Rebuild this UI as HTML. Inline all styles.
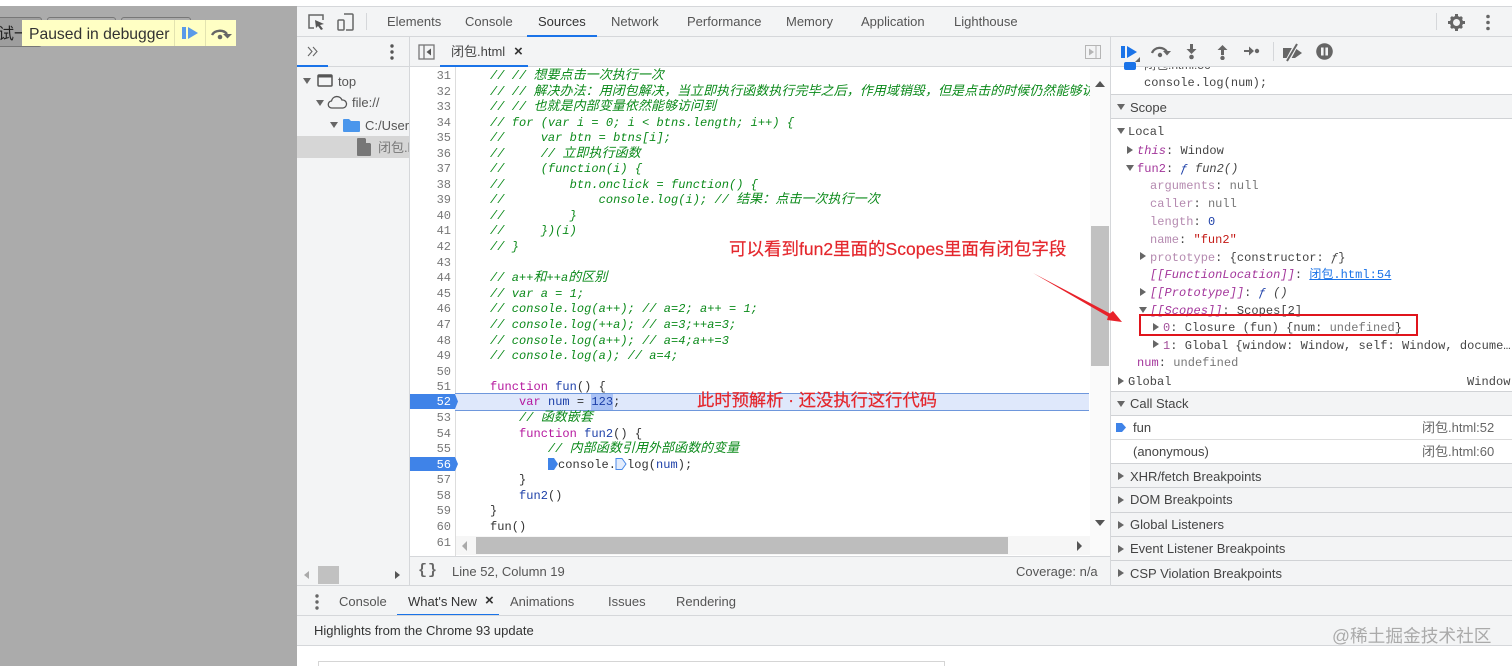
<!DOCTYPE html>
<html><head><meta charset="utf-8"><style>
html,body{margin:0;padding:0;width:1512px;height:666px;overflow:hidden;background:#fff}
body{position:relative;font-family:"Liberation Sans","Noto Sans CJK SC",sans-serif;font-size:13px;color:#555}
.a{position:absolute}
.t{position:absolute;white-space:pre;line-height:16px}
.b{position:absolute;background:#d5d7da}
.m{font-family:"Liberation Mono","Noto Sans CJK SC",monospace;font-size:12px;letter-spacing:.04px;color:#444}
.h{position:absolute;left:1111px;width:401px;background:#f3f4f5;border-bottom:1px solid #d0d2d5;box-sizing:border-box}
.tri{position:absolute;width:0;height:0}
.r{border-top:4px solid transparent;border-bottom:4px solid transparent;border-left:6px solid #666}
.d{border-left:4.5px solid transparent;border-right:4.5px solid transparent;border-top:6px solid #666}
.l{position:relative;height:16px;line-height:16px;white-space:pre;font-family:"Liberation Mono","Noto Sans CJK SC",monospace;font-size:12px;letter-spacing:.04px;color:#333}
.g{color:#0b8a1a;font-style:italic}
.g b{font:italic 13px/1px "Noto Sans CJK SC",sans-serif;letter-spacing:.05px}
.k{color:#b5179e}.f{color:#1c3fa8}
.p{color:#a3509b}.pi{color:#a3369b;font-style:italic}.n{color:#777}.v{color:#555}
#nums div{height:16px;line-height:16px;text-align:right;font-family:"Liberation Mono",monospace;font-size:12px;color:#777}
.l:nth-child(2),.l:nth-child(4),.l:nth-child(6),.l:nth-child(8),.l:nth-child(10),.l:nth-child(13),.l:nth-child(15),.l:nth-child(18),.l:nth-child(20),.l:nth-child(21),.l:nth-child(24),.l:nth-child(26),.l:nth-child(28){height:15px}
#nums div:nth-child(2),#nums div:nth-child(4),#nums div:nth-child(6),#nums div:nth-child(8),#nums div:nth-child(10),#nums div:nth-child(13),#nums div:nth-child(15),#nums div:nth-child(18),#nums div:nth-child(20),#nums div:nth-child(21),#nums div:nth-child(24),#nums div:nth-child(26),#nums div:nth-child(28){height:15px}
</style></head><body>

<!-- page behind devtools -->
<div class="a" style="left:0;top:6px;width:297px;height:660px;background:#ababab"></div>
<div class="a" style="left:-10px;top:17px;width:50px;height:28px;border:1px solid #777;border-radius:3px;background:#9e9e9e"></div>
<div class="a" style="left:47px;top:17px;width:67px;height:10px;border:1px solid #777;border-radius:3px"></div>
<div class="a" style="left:121px;top:17px;width:68px;height:10px;border:1px solid #777;border-radius:3px"></div>
<div class="t" style="left:-2px;top:26px;font-size:16px;line-height:18px;color:#222">试一</div>
<div class="a" style="left:22px;top:20px;width:214px;height:26px;background:#ffffc4"></div>
<div class="t" style="left:29px;top:26px;font-size:15.7px;line-height:17px;color:#333">Paused in debugger</div>
<div class="a" style="left:174px;top:20px;width:1px;height:26px;background:#e3e3b0"></div>
<div class="a" style="left:205px;top:20px;width:1px;height:26px;background:#e3e3b0"></div>
<svg class="a" style="left:180px;top:25px" width="20" height="16"><rect x="2" y="2" width="4" height="12" fill="#5a9ae8"/><path d="M8 2l10 6-10 6z" fill="#5a9ae8"/></svg>
<svg class="a" style="left:209px;top:26px" width="24" height="16"><path d="M3 9a8.500 7 0 0 1 15 -1" fill="none" stroke="#666" stroke-width="2.400"/><path d="M14 8h9l-4.500 4.500z" fill="#666"/><circle cx="11" cy="11" r="2.300" fill="#666"/></svg>

<!-- devtools base -->
<div class="a" style="left:297px;top:6px;width:1215px;height:660px;background:#f3f4f5"></div>
<div class="b" style="left:297px;top:6px;width:1215px;height:1px"></div>
<div class="b" style="left:297px;top:36px;width:1215px;height:1px"></div>

<!-- top toolbar -->
<svg class="a" style="left:307px;top:12px" width="20" height="20" fill="none" stroke="#666" stroke-width="1.500"><path d="M7 16H2V3h14v5"/><path d="M8 8l9 4-4 1 3 4-2 1-3-4-2 2z" fill="#555" stroke="none"/></svg>
<svg class="a" style="left:336px;top:12px" width="20" height="20" fill="none" stroke="#666" stroke-width="1.500"><rect x="2" y="8" width="6" height="10" rx="1"/><path d="M8 2h8a1 1 0 0 1 1 1v14a1 1 0 0 1-1 1h-6"/></svg>
<div class="b" style="left:366px;top:13px;width:1px;height:17px"></div>
<div class="t" style="left:387px;top:14px">Elements</div>
<div class="t" style="left:465px;top:14px">Console</div>
<div class="t" style="left:538px;top:14px;color:#333">Sources</div>
<div class="t" style="left:611px;top:14px">Network</div>
<div class="t" style="left:687px;top:14px">Performance</div>
<div class="t" style="left:786px;top:14px">Memory</div>
<div class="t" style="left:861px;top:14px">Application</div>
<div class="t" style="left:954px;top:14px">Lighthouse</div>
<div class="a" style="left:527px;top:35px;width:70px;height:2px;background:#1a73e8"></div>
<div class="b" style="left:1436px;top:13px;width:1px;height:17px"></div>
<svg class="a" style="left:1448px;top:14px" width="17" height="17"><circle cx="8.500" cy="8.500" r="5" fill="none" stroke="#666" stroke-width="3"/><path d="M7 0h3v3H7zM7 14h3v3H7zM0 7h3v3H0zM14 7h3v3h-3zM2 4l2-2 2 2-2 2zM11 4l2-2 2 2-2 2zM2 13l2-2 2 2-2 2zM11 13l2-2 2 2-2 2z" fill="#666"/></svg>
<svg class="a" style="left:1484px;top:14px" width="8" height="18" fill="#666"><circle cx="4" cy="2.500" r="1.800"/><circle cx="4" cy="8.500" r="1.800"/><circle cx="4" cy="14.500" r="1.800"/></svg>

<!-- navigator -->
<div class="a" style="left:297px;top:67px;width:112px;height:490px;background:#f3f4f5"></div>
<div class="b" style="left:297px;top:66px;width:1215px;height:1px"></div>
<div class="b" style="left:409px;top:37px;width:1px;height:549px"></div>
<svg class="a" style="left:307px;top:46px" width="12" height="11" fill="none" stroke="#666" stroke-width="1.100"><path d="M1 1l4 4.500L1 10M6 1l4 4.500L6 10"/></svg>
<svg class="a" style="left:388px;top:44px" width="8" height="16" fill="#555"><circle cx="4" cy="2" r="1.700"/><circle cx="4" cy="8" r="1.700"/><circle cx="4" cy="14" r="1.700"/></svg>
<div class="a" style="left:297px;top:65px;width:31px;height:2px;background:#1a73e8"></div>
<div class="tri d" style="left:303px;top:78px"></div>
<svg class="a" style="left:317px;top:74px" width="17" height="14"><rect x="1" y="1" width="14" height="11" rx="1" fill="none" stroke="#555" stroke-width="1.500"/><rect x="1" y="1" width="14" height="2.500" fill="#555"/></svg>
<div class="t" style="left:338px;top:74px">top</div>
<div class="tri d" style="left:316px;top:100px"></div>
<svg class="a" style="left:327px;top:95px" width="21" height="15"><path d="M5 13a3.500 3.500 0 0 1-.5-7 5.500 5.500 0 0 1 10.500-1 4 4 0 0 1 1 8z" fill="none" stroke="#555" stroke-width="1.300"/></svg>
<div class="t" style="left:352px;top:95px">file://</div>
<div class="tri d" style="left:330px;top:122px"></div>
<svg class="a" style="left:343px;top:118px" width="17" height="15"><path d="M0 2a1 1 0 0 1 1-1h5l2 2h8a1 1 0 0 1 1 1v9a1 1 0 0 1-1 1H1a1 1 0 0 1-1-1z" fill="#4a96ec"/></svg>
<div class="a" style="left:365px;top:118px;width:44px;overflow:hidden;white-space:pre;line-height:16px">C:/Users</div>
<div class="a" style="left:297px;top:136px;width:112px;height:22px;background:#d6d6d6"></div>
<svg class="a" style="left:357px;top:138px" width="14" height="18"><path d="M0 1a1 1 0 0 1 1-1h7l6 6v11a1 1 0 0 1-1 1H1a1 1 0 0 1-1-1z" fill="#777"/><path d="M9 .5V5h4.500z" fill="#d6d6d6"/></svg>
<div class="a" style="left:378px;top:140px;width:31px;overflow:hidden;white-space:pre;line-height:16px;color:#777">闭包.html</div>
<!-- nav scrollbar -->
<div class="tri" style="left:304px;top:571px;border-top:4.5px solid transparent;border-bottom:4.5px solid transparent;border-right:5px solid #aaa"></div>
<div class="a" style="left:318px;top:566px;width:21px;height:18px;background:#c1c1c1"></div>
<div class="tri" style="left:395px;top:571px;border-top:4.5px solid transparent;border-bottom:4.500px solid transparent;border-left:5px solid #555"></div>

<!-- editor tabs -->
<svg class="a" style="left:418px;top:44px" width="18" height="17"><rect x="1" y="1" width="15" height="14" fill="none" stroke="#777" stroke-width="1.300"/><path d="M6 1v14" stroke="#777" stroke-width="1.300"/><path d="M13 4.500v7L8.500 8z" fill="#555"/></svg>
<div class="t" style="left:451px;top:44px;color:#444">闭包.html</div>
<div class="t" style="left:514px;top:44px;font-weight:bold;color:#333;font-size:15px">×</div>
<div class="a" style="left:440px;top:65px;width:88px;height:2px;background:#1a73e8"></div>
<svg class="a" style="left:1085px;top:45px" width="17" height="15"><rect x=".5" y=".5" width="15" height="13" fill="none" stroke="#b5b5b5"/><path d="M11 1v12" stroke="#b5b5b5"/><path d="M4 3.500v7L9 7z" fill="#b5b5b5"/></svg>

<!-- editor -->
<div class="a" style="left:410px;top:67px;width:700px;height:489px;background:#fff"></div>
<div class="b" style="left:455px;top:67px;width:1px;height:489px;background:#ddd"></div>
<div class="a" style="left:455px;top:393px;width:634px;height:18px;background:#dfe8fb;border-top:1px solid #6e97dc;border-bottom:1px solid #6e97dc;box-sizing:border-box"></div>
<div class="a" style="left:591px;top:394px;width:22px;height:16px;background:#aac2f5"></div>
<svg class="a" style="left:410px;top:394px" width="49" height="15"><path d="M0 0h45l3 7.500-3 7.500H0z" fill="#3f83e8"/></svg>
<svg class="a" style="left:410px;top:457px" width="49" height="14"><path d="M0 0h45l3 7-3 7H0z" fill="#3f83e8"/></svg>

<div id="nums" class="a" style="left:410px;top:68px;width:41px;height:488px;overflow:hidden">
<div>31</div><div>32</div><div>33</div><div>34</div><div>35</div><div>36</div><div>37</div><div>38</div><div>39</div><div>40</div><div>41</div><div>42</div><div>43</div><div>44</div><div>45</div><div>46</div><div>47</div><div>48</div><div>49</div><div>50</div><div>51</div><div style="color:#fff">52</div><div>53</div><div>54</div><div>55</div><div style="color:#fff">56</div><div>57</div><div>58</div><div>59</div><div>60</div><div>61</div>
</div>

<div class="a" style="left:490px;top:68px;width:600px;height:468px;overflow:hidden">
<div class="l g">// // <b>想要点击一次执行一次</b></div>
<div class="l g">// // <b>解决办法：用闭包解决，当立即执行函数执行完毕之后，作用域销毁，但是点击的时候仍然能够访问到</b></div>
<div class="l g">// // <b>也就是内部变量依然能够访问到</b></div>
<div class="l g">// for (var i = 0; i &lt; btns.length; i++) {</div>
<div class="l g">//     var btn = btns[i];</div>
<div class="l g">//     // <b>立即执行函数</b></div>
<div class="l g">//     (function(i) {</div>
<div class="l g">//         btn.onclick = function() {</div>
<div class="l g">//             console.log(i); // <b>结果：点击一次执行一次</b></div>
<div class="l g">//         }</div>
<div class="l g">//     })(i)</div>
<div class="l g">// }</div>
<div class="l"> </div>
<div class="l g">// a++<b>和</b>++a<b>的区别</b></div>
<div class="l g">// var a = 1;</div>
<div class="l g">// console.log(a++); // a=2; a++ = 1;</div>
<div class="l g">// console.log(++a); // a=3;++a=3;</div>
<div class="l g">// console.log(a++); // a=4;a++=3</div>
<div class="l g">// console.log(a); // a=4;</div>
<div class="l"> </div>
<div class="l"><span class="k">function</span> <span class="f">fun</span>() {</div>
<div class="l">    <span class="k">var</span> <span class="f">num</span> = <span class="f">123</span>;</div>
<div class="l g">    // <b>函数嵌套</b></div>
<div class="l">    <span class="k">function</span> <span class="f">fun2</span>() {</div>
<div class="l g">        // <b>内部函数引用外部函数的变量</b></div>
<div class="l"><span style="position:absolute;left:68px">console.</span><span style="position:absolute;left:137px">log(<span class="f">num</span>);</span></div>
<div class="l">    }</div>
<div class="l">    <span class="f">fun2</span>()</div>
<div class="l">}</div>
<div class="l">fun()</div>
</div>
<svg class="a" style="left:547px;top:458px" width="12" height="12"><path d="M1 0h6l4 6-4 6H1z" fill="#3f83e8"/></svg>
<svg class="a" style="left:615px;top:458px" width="12" height="12"><path d="M1 .5h6l4 5.500-4 5.500H1z" fill="#e3ecfc" stroke="#4a8ae8"/></svg>

<!-- editor scrollbars -->
<div class="a" style="left:1090px;top:67px;width:20px;height:489px;background:#fafafa"></div>
<div class="a" style="left:1091px;top:226px;width:18px;height:140px;background:#c1c1c1"></div>
<div class="tri" style="left:1095px;top:81px;border-left:5px solid transparent;border-right:5px solid transparent;border-bottom:6px solid #555"></div>
<div class="tri" style="left:1095px;top:520px;border-left:5px solid transparent;border-right:5px solid transparent;border-top:6px solid #555"></div>
<div class="a" style="left:456px;top:536px;width:634px;height:19px;background:#f6f6f6"></div>
<div class="a" style="left:476px;top:537px;width:532px;height:17px;background:#bdbdbd"></div>
<div class="tri" style="left:462px;top:541px;border-top:5px solid transparent;border-bottom:5px solid transparent;border-right:5px solid #aaa"></div>
<div class="tri" style="left:1077px;top:541px;border-top:5px solid transparent;border-bottom:5px solid transparent;border-left:5px solid #555"></div>

<!-- status bar -->
<div class="b" style="left:410px;top:556px;width:700px;height:1px"></div>
<div class="t" style="left:418px;top:562px;font:bold 15px/18px 'Liberation Mono',monospace;color:#666;letter-spacing:1px">{}</div>
<div class="t" style="left:452px;top:564px">Line 52, Column 19</div>
<div class="t" style="left:1016px;top:564px">Coverage: n/a</div>
<div class="b" style="left:297px;top:585px;width:1215px;height:1px"></div>

<!-- drawer -->
<svg class="a" style="left:313px;top:593px" width="8" height="18" fill="#666"><circle cx="4" cy="3" r="1.700"/><circle cx="4" cy="9" r="1.700"/><circle cx="4" cy="15" r="1.700"/></svg>
<div class="t" style="left:339px;top:594px">Console</div>
<div class="t" style="left:408px;top:594px;color:#333">What's New</div>
<div class="t" style="left:485px;top:593px;font-weight:bold;color:#333;font-size:15px">×</div>
<div class="t" style="left:510px;top:594px">Animations</div>
<div class="t" style="left:608px;top:594px">Issues</div>
<div class="t" style="left:676px;top:594px">Rendering</div>
<div class="a" style="left:397px;top:614px;width:102px;height:2px;background:#1a73e8"></div>
<div class="b" style="left:297px;top:615px;width:1215px;height:1px"></div>
<div class="t" style="left:314px;top:623px;color:#333">Highlights from the Chrome 93 update</div>
<div class="b" style="left:297px;top:645px;width:1215px;height:1px"></div>
<div class="a" style="left:297px;top:646px;width:1215px;height:20px;background:#fff"></div>
<div class="a" style="left:318px;top:661px;width:627px;height:6px;border:1px solid #d5d5d5;box-sizing:border-box"></div>

<!-- sidebar -->
<div class="a" style="left:1111px;top:37px;width:401px;height:29px;background:#f3f4f5"></div>
<div class="a" style="left:1111px;top:67px;width:401px;height:518px;background:#fff"></div>
<div class="b" style="left:1110px;top:37px;width:1px;height:549px"></div>
<svg class="a" style="left:1120px;top:43px" width="22" height="20"><rect x="1" y="3" width="4" height="12" fill="#1a73e8"/><path d="M7 3l10 6-10 6z" fill="#1a73e8"/><path d="M20 14v5h-5z" fill="#666"/></svg>
<svg class="a" style="left:1150px;top:44px" width="22" height="15"><path d="M2 9a8 7 0 0 1 15-1" fill="none" stroke="#666" stroke-width="2.200"/><path d="M13 7h8l-4 4.500z" fill="#666"/><circle cx="10" cy="11" r="2.200" fill="#666"/></svg>
<svg class="a" style="left:1185px;top:44px" width="13" height="16" fill="#666"><path d="M5 0h3v5h3.500L6.500 10 1.500 5H5z"/><circle cx="6.500" cy="13" r="2.300"/></svg>
<svg class="a" style="left:1216px;top:44px" width="13" height="16" fill="#666"><path d="M5 11h3V6h3.500L6.500 1 1.500 6H5z"/><circle cx="6.500" cy="14" r="2.200"/></svg>
<svg class="a" style="left:1244px;top:45px" width="16" height="12" fill="#666"><path d="M0 5h5V1.500L10 6l-5 4.500V7H0z"/><circle cx="13" cy="6" r="2.200"/></svg>
<div class="b" style="left:1273px;top:42px;width:1px;height:19px"></div>
<svg class="a" style="left:1282px;top:42px" width="22" height="20"><path d="M1 6h12l7 5-7 5H1z" fill="#666"/><path d="M5 20L15 1" stroke="#f3f4f5" stroke-width="4.500"/><path d="M5 19L15 2" stroke="#666" stroke-width="2"/></svg>
<svg class="a" style="left:1316px;top:43px" width="17" height="17"><circle cx="8.500" cy="8.500" r="8.300" fill="#666"/><rect x="5" y="4.500" width="2.600" height="8" fill="#f3f4f5"/><rect x="9.400" y="4.500" width="2.600" height="8" fill="#f3f4f5"/></svg>

<div class="a" style="left:1124px;top:62px;width:12px;height:8px;background:#1a73e8;border-radius:2px"></div>
<div class="a" style="left:1144px;top:67px;width:100px;height:4px;overflow:hidden"><div style="margin-top:-9px;font-size:12px;line-height:14px;color:#555;white-space:pre">闭包.html:56</div></div>
<div class="t m" style="left:1144px;top:75px">console.log(num);</div>

<div class="h" style="top:94px;height:25px;border-top:1px solid #d0d2d5"></div>
<div class="tri d" style="left:1117px;top:104px"></div>
<div class="t" style="left:1130px;top:100px;color:#444">Scope</div>

<div class="tri d" style="left:1117px;top:128px"></div>
<div class="t m" style="left:1128px;top:124px">Local</div>
<div class="tri r" style="left:1127px;top:146px"></div>
<div class="t m" style="left:1137px;top:143px"><span class="pi">this</span>: Window</div>
<div class="tri d" style="left:1126px;top:165px"></div>
<div class="t m" style="left:1137px;top:161px"><span style="color:#a3369b">fun2</span>: <i style="color:#1c3fa8">ƒ</i> <i>fun2()</i></div>
<div class="t m" style="left:1150px;top:178px"><span style="color:#b58ab0">arguments</span>: <span class="n">null</span></div>
<div class="t m" style="left:1150px;top:196px"><span style="color:#b58ab0">caller</span>: <span class="n">null</span></div>
<div class="t m" style="left:1150px;top:214px"><span style="color:#b58ab0">length</span>: <span style="color:#1c3fa8">0</span></div>
<div class="t m" style="left:1150px;top:232px"><span style="color:#b58ab0">name</span>: <span style="color:#c41a16">"fun2"</span></div>
<div class="tri r" style="left:1140px;top:252px"></div>
<div class="t m" style="left:1150px;top:250px"><span style="color:#b58ab0">prototype</span>: {constructor: <i>ƒ</i>}</div>
<div class="t m" style="left:1150px;top:267px"><span class="pi">[[FunctionLocation]]</span>: <span style="color:#1a73e8;text-decoration:underline">闭包.html:54</span></div>
<div class="tri r" style="left:1140px;top:288px"></div>
<div class="t m" style="left:1150px;top:285px"><span class="pi">[[Prototype]]</span>: <i style="color:#1c3fa8">ƒ</i> <i>()</i></div>
<div class="tri d" style="left:1139px;top:307px"></div>
<div class="t m" style="left:1150px;top:303px"><span class="pi">[[Scopes]]</span>: Scopes[2]</div>
<div class="tri r" style="left:1153px;top:323px"></div>
<div class="t m" style="left:1163px;top:320px"><span class="p">0</span>: Closure (fun) {num: <span class="n">undefined</span>}</div>
<div class="tri r" style="left:1153px;top:340px"></div>
<div class="t m" style="left:1163px;top:338px"><span class="p">1</span>: Global {window: Window, self: Window, docume…</div>
<div class="t m" style="left:1137px;top:355px"><span style="color:#a3369b">num</span>: <span class="n">undefined</span></div>
<div class="tri r" style="left:1118px;top:377px"></div>
<div class="t m" style="left:1128px;top:374px">Global</div>
<div class="t m" style="left:1467px;top:374px">Window</div>

<div class="h" style="top:391px;height:25px;border-top:1px solid #d0d2d5"></div>
<div class="tri d" style="left:1117px;top:401px"></div>
<div class="t" style="left:1130px;top:396px;color:#444">Call Stack</div>
<svg class="a" style="left:1116px;top:423px" width="10" height="9"><path d="M0 0h6l4 4.500L6 9H0z" fill="#3f83e8"/></svg>
<div class="t" style="left:1133px;top:420px;color:#444">fun</div>
<div class="t" style="left:1422px;top:420px;color:#666">闭包.html:52</div>
<div class="b" style="left:1111px;top:439px;width:401px;height:1px;background:#ddd"></div>
<div class="t" style="left:1133px;top:444px;color:#444">(anonymous)</div>
<div class="t" style="left:1422px;top:444px;color:#666">闭包.html:60</div>

<div class="h" style="top:463px;height:25px;border-top:1px solid #d0d2d5"></div>
<div class="tri r" style="left:1118px;top:472px"></div>
<div class="t" style="left:1130px;top:469px;color:#444">XHR/fetch Breakpoints</div>
<div class="h" style="top:488px;height:25px"></div>
<div class="tri r" style="left:1118px;top:496px"></div>
<div class="t" style="left:1130px;top:492px;color:#444">DOM Breakpoints</div>
<div class="h" style="top:513px;height:24px"></div>
<div class="tri r" style="left:1118px;top:521px"></div>
<div class="t" style="left:1130px;top:517px;color:#444">Global Listeners</div>
<div class="h" style="top:537px;height:24px"></div>
<div class="tri r" style="left:1118px;top:545px"></div>
<div class="t" style="left:1130px;top:541px;color:#444">Event Listener Breakpoints</div>
<div class="h" style="top:561px;height:25px"></div>
<div class="tri r" style="left:1118px;top:569px"></div>
<div class="t" style="left:1130px;top:566px;color:#444">CSP Violation Breakpoints</div>

<!-- annotations -->
<div class="t" style="left:729px;top:239px;font-size:17.500px;line-height:20px;color:#e4262c;-webkit-text-stroke:.2px #e4262c">可以看到fun2里面的Scopes里面有闭包字段</div>
<div class="t" style="left:697px;top:390px;font-size:17.300px;line-height:20px;color:#e4262c;-webkit-text-stroke:.2px #e4262c">此时预解析 · 还没执行这行代码</div>
<svg class="a" style="left:1020px;top:260px" width="130" height="80"><path d="M13 13L90 53.500 93 51 102 62 87 60 88 56.500z" fill="#e8222a"/></svg>
<div class="a" style="left:1139px;top:314px;width:279px;height:22px;border:2px solid #e0141c;box-sizing:border-box"></div>
<div class="t" style="left:1332px;top:626px;font-size:17.700px;line-height:20px;color:#aaa">@稀土掘金技术社区</div>

</body></html>
